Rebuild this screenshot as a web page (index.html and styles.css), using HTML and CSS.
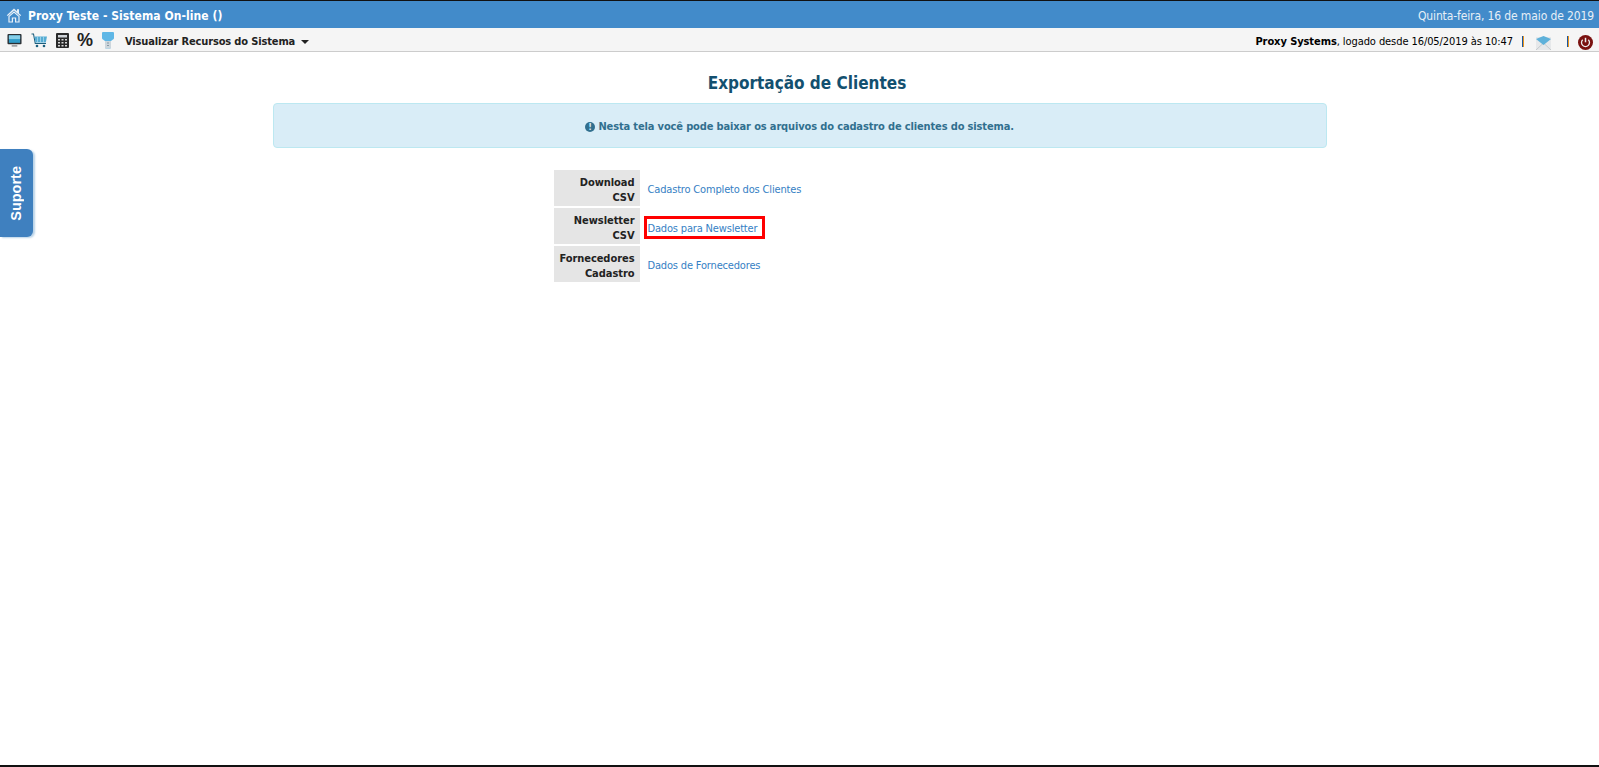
FILE: index.html
```html
<!DOCTYPE html>
<html lang="pt-BR">
<head>
<meta charset="utf-8">
<title>Exportação de Clientes</title>
<link rel="stylesheet" href="styles.css">
</head>
<body>
<div class="screen">
  <header class="topbar">
    <div class="brand">
      <svg class="home" width="16" height="16" viewBox="0 0 16 16"><path d="M8 1.5 .8 8.2l1 .9L8 3.500l6.200 5.600 1-.9-2.200-2V2.200h-2v2.100z" fill="#e8f0f8"/><path d="M3 9.400 8 5l5 4.400V15H9.600v-4H6.400v4H3z" fill="none" stroke="#e8f0f8" stroke-width="1.200"/></svg>
      <span>Proxy Teste - Sistema On-line ()</span>
    </div>
    <div class="date">Quinta-feira, 16 de maio de 2019</div>
  </header>
  <nav class="toolbar">
    <div class="tools">
      <svg class="tool tool-screen" width="15" height="15" viewBox="0 0 16 15"><rect x=".5" y=".5" width="15" height="11" rx="1" fill="#2b2f33"/><rect x="2" y="2" width="12" height="8" fill="#2f9bc9"/><path d="M2 2h12v4H2z" fill="#86cfe9"/><path d="M5 12.500h6V14H5z" fill="#8a8f93"/></svg>
      <svg class="tool tool-cart" width="16" height="15" viewBox="0 0 16 15"><path d="M.5 1h2l1.800 9.500H15" fill="none" stroke="#1d5f7d" stroke-width="1.100"/><path d="M3.500 3.500H16l-1.200 6H4.500z" fill="#55acd3"/><path d="M6.500 3.500v6M9.500 3.500v6M12.500 3.500v6" stroke="#a9d8ec" stroke-width=".8"/><circle cx="6" cy="13" r="1.300" fill="#1d5f7d"/><circle cx="13" cy="13" r="1.300" fill="#1d5f7d"/></svg>
      <svg class="tool tool-calc" width="13" height="15" viewBox="0 0 13 15"><rect width="13" height="15" rx="1" fill="#2a2a2a"/><rect x="2" y="2" width="9" height="2.500" fill="#cfd3d8"/><path d="M2 6h2v1.500H2zM5.500 6h2v1.500h-2zM9 6h2v1.500H9zM2 9h2v1.500H2zM5.500 9h2v1.500h-2zM9 9h2v1.500H9zM2 12h2v1.500H2zM5.500 12h2v1.500h-2zM9 12h2v1.500H9z" fill="#d8d8d8"/></svg>
      <span class="percent">%</span>
      <svg class="tool tool-key" width="12" height="17" viewBox="0 0 12 17"><path d="M0 1Q0 0 1 0h10q1 0 1 1v5q0 1-1 1.500L9 9v6.500q0 1-1 1H4q-1 0-1-1V9L1 7.500Q0 7 0 6z" fill="#5fb7e6"/><path d="M3 9h6v6.500q0 1-1 1H4q-1 0-1-1z" fill="#cdd6dc"/><path d="M5 11h2M5 13.500h2" stroke="#8899a5"/></svg>
      <span class="menu">Visualizar Recursos do Sistema<span class="caret"></span></span>
    </div>
    <div class="session">
      <span class="who"><strong>Proxy Systems</strong>, logado desde 16/05/2019 às 10:47</span>
      <span class="sep"></span>
      <svg class="mail" width="15" height="14" viewBox="0 0 15 14"><rect y="1" width="15" height="13" fill="#e6e8ea"/><path d="M0 14 7.500 7 15 14" fill="none" stroke="#c5cacd"/><path d="M0 3 7.500 0 15 3 7.500 9z" fill="#5eb1da"/></svg>
      <span class="sep sep-2"></span>
      <svg class="power" width="15" height="15" viewBox="0 0 15 15"><circle cx="7.500" cy="7.500" r="7.500" fill="#7a1210"/><path d="M4.700 4.700a4 4 0 1 0 5.600 0" fill="none" stroke="#eee" stroke-width="1.300"/><path d="M7.500 2.800v4.500" stroke="#eee" stroke-width="1.500"/></svg>
    </div>
  </nav>
  <main class="content">
    <h1 class="title">Exportação de Clientes</h1>
    <div class="alert"><span class="alert-icon">!</span> Nesta tela você pode baixar os arquivos do cadastro de clientes do sistema.</div>
    <table class="exports">
      <tr><th>Download<br>CSV</th><td><a href="#">Cadastro Completo dos Clientes</a></td></tr>
      <tr><th>Newsletter<br>CSV</th><td><a href="#" class="marked">Dados para Newsletter</a></td></tr>
      <tr><th>Fornecedores<br>Cadastro</th><td><a href="#">Dados de Fornecedores</a></td></tr>
    </table>
  </main>
  <a class="support" href="#"><span class="support-label">Suporte</span></a>
</div>
</body>
</html>
```
FILE: styles.css
```css
* { box-sizing: border-box; }
html, body { margin: 0; height: 100%; }
body { background: #fff; font-family: "DejaVu Sans Condensed", "DejaVu Sans", sans-serif; font-size: 11px; color: #000; overflow: hidden; }
.screen { height: 767px; border-top: 1px solid #111; border-bottom: 2px solid #111; position: relative; }
.topbar { height: 27px; background: #428bca; color: #fff; display: flex; justify-content: space-between; align-items: center; padding: 2px 5px 0 6px; }
.brand { display: flex; align-items: center; gap: 6px; font-weight: bold; font-size: 12px; letter-spacing: .06px; }
.home { display: block; margin-top: -2px; }
.date { font-size: 12px; color: #e6eff7; letter-spacing: -.12px; }
.toolbar { height: 24px; background: #f5f5f5; border-bottom: 1px solid #ccc; display: flex; justify-content: space-between; align-items: center; padding: 2px 6px 0 7px; }
.tools { display: flex; align-items: center; }
.tool { display: block; }
.tool-screen { margin-right: 9px; }
.tool-cart { margin-right: 9px; }
.tool-calc { margin-right: 8px; }
.tool-key { margin-right: 11px; }
.percent { font-family: "Liberation Sans", sans-serif; font-size: 18px; font-weight: bold; color: #222; width: 25px; }
.menu { font-weight: bold; color: #222; margin-top: 2px; letter-spacing: -.14px; }
.caret { display: inline-block; margin-left: 6px; vertical-align: middle; border-left: 4px solid transparent; border-right: 4px solid transparent; border-top: 4px solid #222; }
.session { display: flex; align-items: center; }
.who { margin-top: 2px; letter-spacing: -.08px; }
.sep { width: 2px; height: 11px; margin: 1px 12px 0 9px; background: linear-gradient(90deg, #1a56a0 50%, #e8941c 50%); }
.sep-2 { margin: 1px 9px 0 16px; }
.mail { margin-top: 4px; }
.power { margin-top: 4px; }
.content { display: flex; flex-direction: column; align-items: center; }
.title { margin: 21px 0 10px 15px; font-size: 17px; line-height: 20px; font-weight: bold; color: #13506f; }
.alert { width: 1054px; height: 45px; line-height: 45px; text-align: center; background: #d9edf7; border: 1px solid #bce8f1; border-radius: 4px; color: #31708f; font-weight: bold; letter-spacing: -.14px; }
.alert-icon { display: inline-block; width: 10px; height: 10px; line-height: 10px; border-radius: 50%; background: #31708f; color: #d9edf7; font-size: 9px; text-align: center; vertical-align: 0; }
.exports { margin-top: 20px; border-collapse: separate; border-spacing: 0 2px; width: 492px; }
.exports th { width: 86px; height: 36px; padding: 4px 5px 0 0; background: #e5e5e5; text-align: right; font-weight: bold; color: #222; line-height: 15px; letter-spacing: -.05px; }
.exports td { padding: 2px 0 0 8px; }
.exports a { color: #3580c4; text-decoration: none; letter-spacing: -.17px; }
.exports a.marked { display: inline-block; margin: 1px 0 0 -4px; height: 23px; line-height: 19px; border: 3px solid #f00; padding: 0 5px 0 1px; }
.support { position: absolute; left: 0; top: 148px; width: 33px; height: 88px; padding-right: 2px; background: #3f80bf; border-radius: 0 6px 6px 0; box-shadow: 2px 1px 2px #b9d3e8; color: #fff; font-family: "Liberation Sans", sans-serif; font-size: 14.5px; font-weight: bold; text-decoration: none; display: flex; align-items: center; justify-content: center; }
.support-label { writing-mode: vertical-rl; transform: rotate(180deg); }
```
